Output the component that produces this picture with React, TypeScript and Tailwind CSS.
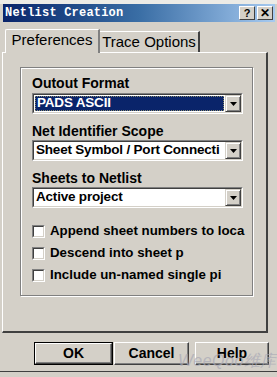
import React from 'react';

const sunken =
  'border border-t-[#808080] border-l-[#808080] border-r-white border-b-white';
const sunkenInner =
  'border border-t-[#404040] border-l-[#404040] border-r-[#d4d0c8] border-b-[#d4d0c8]';

const DropArrow = () => (
  <div className="w-[16px] h-full bg-[#d4d0c8] border border-t-[#d4d0c8] border-l-[#d4d0c8] border-r-[#404040] border-b-[#404040] flex items-center justify-center shadow-[inset_1px_1px_0_#fff,inset_-1px_-1px_0_#808080]">
    <svg width="7" height="4" viewBox="0 0 7 4">
      <polygon points="0,0 7,0 3.5,4" fill="#000" />
    </svg>
  </div>
);

interface ComboProps {
  value: string;
  selected?: boolean;
}

const Combo: React.FC<ComboProps> = ({ value, selected }) => (
  <div className={`w-[211px] h-[21px] ${sunken}`}>
    <div className={`h-full flex bg-white ${sunkenInner}`}>
      <div className="flex-1 min-w-0 p-[1px] flex">
        <div
          className={`flex-1 min-w-0 flex items-center pl-[1px] overflow-hidden whitespace-nowrap text-[13.5px] font-bold tracking-[-0.2px] ${
            selected ? 'bg-[#0a246a] text-white border border-dotted border-[#8a8a6a]' : 'text-black'
          }`}
        >
          {value}
        </div>
      </div>
      <DropArrow />
    </div>
  </div>
);

const Check: React.FC<{ label: string }> = ({ label }) => (
  <div className="flex items-center h-[14px]">
    <div className={`w-[13px] h-[13px] ${sunken}`}>
      <div className={`w-full h-full bg-white ${sunkenInner}`} />
    </div>
    <span className="ml-[5px] text-[13.3px] font-bold whitespace-nowrap">{label}</span>
  </div>
);

const Button: React.FC<{ label: string; isDefault?: boolean; w: string }> = ({ label, isDefault, w }) => (
  <div className={`${w} h-[23px] ${isDefault ? 'border border-black' : ''}`}>
    <div className="w-full h-full bg-[#d4d0c8] border border-t-white border-l-white border-r-[#404040] border-b-[#404040] shadow-[inset_-1px_-1px_0_#808080] flex items-center justify-center text-[14px] font-bold">
      {label}
    </div>
  </div>
);

export default function App() {
  return (
    <div
      className="relative w-[277px] h-[377px] bg-[#d4d0c8] overflow-hidden text-black flex flex-col"
      style={{ fontFamily: '"Liberation Sans", Arial, sans-serif' }}
    >
      <div className="h-[4px] bg-[#ecebe6]" />
      {/* title bar */}
      <div className="ml-[3px] mr-[2px] h-[18px] bg-gradient-to-r from-[#0a246a] via-[#3a6ea5] to-[#a6caf0] flex items-center pl-[2px] pr-[2px]">
        <span
          className="text-white font-bold text-[12px] tracking-[0.2px]"
          style={{ fontFamily: '"Liberation Mono", "DejaVu Sans Mono", monospace' }}
        >
          Netlist Creation
        </span>
        <div className="ml-auto flex gap-[2px]">
          <div className="w-[16px] h-[14px] bg-[#d4d0c8] border border-t-white border-l-white border-r-[#404040] border-b-[#404040] flex items-center justify-center text-[11px] font-bold leading-none">
            ?
          </div>
          <div className="w-[16px] h-[14px] bg-[#d4d0c8] border border-t-white border-l-white border-r-[#404040] border-b-[#404040] flex items-center justify-center text-[12px] font-bold leading-none">
            ✕
          </div>
        </div>
      </div>

      {/* tabs */}
      <div className="mt-[6px] ml-[5px] flex items-end h-[24px] relative z-10">
        <div className="w-[95px] h-[24px] border-t border-l border-white border-r-2 border-r-[#808080] rounded-tl-[2px] flex items-center justify-center text-[15px] bg-[#d4d0c8] -mb-[1px] pb-[2px] whitespace-nowrap">
          Preferences
        </div>
        <div className="w-[100px] h-[21px] border-t border-white border-r-2 border-r-[#404040] flex items-center justify-center text-[15px] bg-[#d4d0c8] whitespace-nowrap">
          Trace Options
        </div>
      </div>

      {/* panel */}
      <div className="ml-[2px] w-[266px] h-[281px] border-t border-l border-white border-r-2 border-r-[#404040] border-b-2 border-b-[#404040] pt-[14px] pl-[17px]">
        <div className="w-[233px] h-[229px] border border-[#808080] shadow-[inset_1px_1px_0_#fff,1px_1px_0_#fff] pl-[11px] pt-[7px] overflow-hidden">
          <div className="text-[14px] font-bold leading-[16px] h-[16px]">Outout Format</div>
          <div className="mt-[2px]">
            <Combo value="PADS ASCII" selected />
          </div>
          <div className="mt-[9px] text-[14px] font-bold leading-[16px] h-[16px]">Net Identifier Scope</div>
          <div className="mt-[1px]">
            <Combo value="Sheet Symbol / Port Connecti" />
          </div>
          <div className="mt-[9px] text-[14px] font-bold leading-[16px] h-[16px]">Sheets to Netlist</div>
          <div className="mt-[1px]">
            <Combo value="Active project" />
          </div>
          <div className="mt-[16px] flex flex-col gap-[8px]">
            <Check label="Append sheet numbers to loca" />
            <Check label="Descend into sheet p" />
            <Check label="Include un-named single pi" />
          </div>
        </div>
      </div>

      {/* buttons */}
      <div className="mt-[9px] ml-[34px] flex">
        <Button label="OK" isDefault w="w-[79px]" />
        <div className="ml-[1px]">
          <Button label="Cancel" w="w-[75px]" />
        </div>
        <div className="ml-[6px]">
          <Button label="Help" w="w-[74px]" />
        </div>
      </div>

      <div className="mt-auto mb-[5px] h-[1px] bg-[#404040]" />

      {/* watermark */}
      <div className="absolute left-[178px] top-[352px] text-[16px] italic text-[#a9a9b6] opacity-70 tracking-[0.5px] pointer-events-none leading-[18px]">
        WeeQoo维库
      </div>
    </div>
  );
}
